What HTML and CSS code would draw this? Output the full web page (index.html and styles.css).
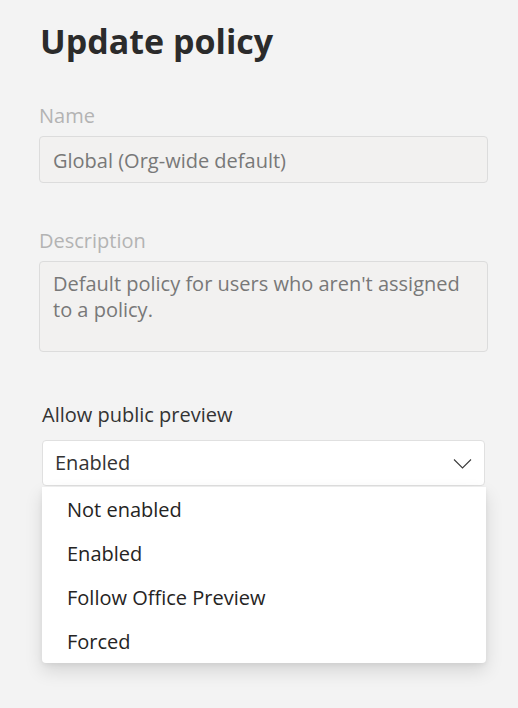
FILE: index.html
```html
<!DOCTYPE html>
<html lang="en">
<head>
<meta charset="utf-8">
<title>Update policy</title>
<link rel="stylesheet" href="styles.css">
</head>
<body>
<main class="panel">
  <h1 class="title">Update policy</h1>
  <div class="field">
    <div class="label muted">Name</div>
    <div class="input disabled">Global (Org-wide default)</div>
  </div>
  <div class="field">
    <div class="label muted">Description</div>
    <div class="input disabled textarea">Default policy for users who aren't assigned to a policy.</div>
  </div>
  <div class="field select-field">
    <div class="label">Allow public preview</div>
    <div class="select-wrap">
      <div class="select">
        <span>Enabled</span>
        <svg class="chev" width="19" height="11" viewBox="0 0 19 11"><path d="M1 1.5 L9.5 10 L18 1.5" fill="none" stroke="#3b3b3b" stroke-width="1.1"/></svg>
      </div>
      <ul class="menu">
        <li>Not enabled</li>
        <li>Enabled</li>
        <li>Follow Office Preview</li>
        <li>Forced</li>
      </ul>
    </div>
  </div>
</main>
</body>
</html>
```
FILE: styles.css
```css
html, body {
  margin: 0;
  padding: 0;
  background: #f3f3f3;
  min-height: 100%;
}
html {
  height: 100%;
}
body {
  font-family: "Open Sans", "Noto Sans", sans-serif;
  color: #333;
  min-height: 708px;
}
.panel {
  padding: 17px 30px 0 39px;
  width: 449px;
}
.title {
  margin: 0 0 38px 1px;
  font-size: 34px;
  font-weight: 700;
  color: #2b2b2b;
  line-height: 48px;
}
.field {
  margin-bottom: 45px;
}
.label {
  font-size: 20px;
  line-height: 26px;
  margin-bottom: 7px;
}
.muted {
  color: #b3b3b3;
}
.input {
  border: 1px solid #dcdcdc;
  border-radius: 4px;
  background: #f2f1f0;
  color: #787878;
  font-size: 20px;
  line-height: 26px;
  padding: 11px 13px 8px;
}
.textarea {
  min-height: 52px;
  padding-top: 9px;
  padding-bottom: 28px;
}
.select-field {
  margin: 50px 3px 0 3px;
}
.select-field .label {
  color: #333;
  margin-bottom: 12px;
}
.select-wrap {
  position: relative;
}
.select {
  display: flex;
  align-items: center;
  justify-content: space-between;
  background: #fff;
  border: 1px solid #e0e0e0;
  border-radius: 4px;
  height: 44px;
  padding: 0 12px 0 12px;
  font-size: 20px;
  line-height: 26px;
  color: #333;
}
.chev {
  margin-top: 1px;
}
.menu {
  position: absolute;
  top: 47px;
  left: 0;
  right: -1px;
  margin: 0;
  padding: 1px 0 0 0;
  list-style: none;
  background: #fff;
  border-radius: 0 0 4px 4px;
  box-shadow: 0 8px 18px rgba(0,0,0,0.12), 0 2px 5px rgba(0,0,0,0.06);
}
.menu li {
  height: 44px;
  line-height: 44px;
  padding-left: 25px;
  font-size: 20px;
  color: #252423;
}
.menu li:last-child {
  height: 43px;
}
```
